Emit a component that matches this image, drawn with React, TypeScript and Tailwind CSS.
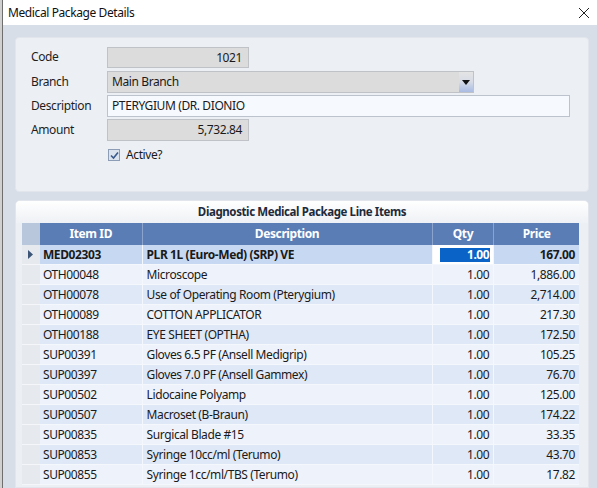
import React from "react";

const rows: [string, string, string, string][] = [
  ["MED02303", "PLR 1L (Euro-Med) (SRP) VE", "1.00", "167.00"],
  ["OTH00048", "Microscope", "1.00", "1,886.00"],
  ["OTH00078", "Use of Operating Room (Pterygium)", "1.00", "2,714.00"],
  ["OTH00089", "COTTON APPLICATOR", "1.00", "217.30"],
  ["OTH00188", "EYE SHEET (OPTHA)", "1.00", "172.50"],
  ["SUP00391", "Gloves 6.5 PF (Ansell Medigrip)", "1.00", "105.25"],
  ["SUP00397", "Gloves 7.0 PF (Ansell Gammex)", "1.00", "76.70"],
  ["SUP00502", "Lidocaine Polyamp", "1.00", "125.00"],
  ["SUP00507", "Macroset (B-Braun)", "1.00", "174.22"],
  ["SUP00835", "Surgical Blade #15", "1.00", "33.35"],
  ["SUP00853", "Syringe 10cc/ml (Terumo)", "1.00", "43.70"],
  ["SUP00855", "Syringe 1cc/ml/TBS (Terumo)", "1.00", "17.82"],
];

function Label({ children }: { children: React.ReactNode }) {
  return <div className="w-[76px] shrink-0 text-[12px] text-[#1e1e1e]">{children}</div>;
}

export default function App() {
  return (
    <div
      className="relative w-[597px] h-[488px] overflow-hidden bg-[#d7dee8] flex flex-col text-[#1a1a1a] tracking-[-0.4px]"
      style={{ fontFamily: '"Noto Sans", "Open Sans", sans-serif' }}
    >
      {/* title bar */}
      <div className="h-[25px] shrink-0 bg-white flex items-center pl-[8px] pr-[6px]">
        <div className="text-[12px] text-[#111] flex-1">Medical Package Details</div>
        <svg width="12" height="12" viewBox="0 0 12 12" className="mr-[1px]">
          <path d="M1 1 L11 11 M11 1 L1 11" stroke="#222" strokeWidth="1" />
        </svg>
      </div>
      {/* left window edge */}
      <div className="absolute left-0 top-0 h-full w-[3px] bg-[#d0d0d0] border-r border-[#6e6e6e]" />

      <div className="flex-1 flex flex-col pl-[15px] pr-[8px] pt-[12px]">
        {/* form panel */}
        <div className="h-[155px] shrink-0 bg-[#eceff3] rounded-[4px] border border-[#e2e6ec] flex flex-col pl-[15px] pt-[8px] gap-[2px]">
          <div className="flex items-center h-[22px]">
            <Label>Code</Label>
            <div className="w-[142px] h-[21px] bg-[#dcdcdc] border border-[#bfc3c8] text-[12px] text-right pr-[6px] leading-[19px]">1021</div>
          </div>
          <div className="flex items-center h-[22px] mt-[1px]">
            <Label>Branch</Label>
            <div className="w-[367px] h-[22px] bg-[#dcdcdc] border border-[#bfc3c8] flex">
              <div className="flex-1 text-[12px] pl-[4px] leading-[20px]">Main Branch</div>
              <div className="w-[14px] h-full bg-gradient-to-b from-[#e4e4e4] via-[#d6dbe6] to-[#a9bbe3] flex items-center justify-center">
                <svg width="8" height="5" viewBox="0 0 8 5">
                  <path d="M0 0 H8 L4 5 Z" fill="#111" />
                </svg>
              </div>
            </div>
          </div>
          <div className="flex items-center h-[22px]">
            <Label>Description</Label>
            <div className="w-[463px] h-[22px] bg-[#f6f9fd] border border-[#bcc3cc] text-[12px] pl-[4px] leading-[20px]">PTERYGIUM (DR. DIONIO</div>
          </div>
          <div className="flex items-center h-[22px]">
            <Label>Amount</Label>
            <div className="w-[142px] h-[22px] bg-[#dcdcdc] border border-[#bfc3c8] text-[12px] text-right pr-[6px] leading-[20px]">5,732.84</div>
          </div>
          <div className="flex items-center h-[22px] pl-[77px] mt-[1px]">
            <div className="w-[12px] h-[12px] border border-[#8c9db5] bg-[#dbe3ee] flex items-center justify-center">
              <svg width="9" height="9" viewBox="0 0 9 9">
                <path d="M1 4.5 L3.5 7 L8 1.5" stroke="#3a5a8c" strokeWidth="1.6" fill="none" />
              </svg>
            </div>
            <div className="text-[12px] ml-[6px]">Active?</div>
          </div>
        </div>

        {/* line items panel */}
        <div className="mt-[8px] flex-1 bg-[#eceff3] rounded-t-[5px] border border-[#e2e6ec] flex flex-col overflow-hidden">
          <div className="h-[22px] shrink-0 bg-gradient-to-b from-white to-[#eef1f5] flex items-center justify-center text-[11.5px] font-bold text-[#1e2a3a]">
            Diagnostic Medical Package Line Items
          </div>
          <div className="pl-[6px] pr-[9px]">
            {/* header */}
            <div className="flex h-[22px] text-[12px] font-bold text-white">
              <div className="w-[18px] bg-[#b9c7dc]" />
              <div className="w-[103px] bg-[#5a7db5] border-r border-[#8aa4cc] flex items-center justify-center">Item ID</div>
              <div className="w-[291px] bg-[#5a7db5] border-r border-[#8aa4cc] flex items-center justify-center">Description</div>
              <div className="w-[62px] bg-[#5a7db5] border-r border-[#8aa4cc] flex items-center justify-center">Qty</div>
              <div className="w-[85px] bg-[#5a7db5] flex items-center justify-center">Price</div>
            </div>
            {rows.map((r, i) => {
              const selected = i === 0;
              const bg = selected ? "bg-[#c7d9f2]" : i % 2 === 1 ? "bg-[#edf2fb]" : "bg-[#dfe8f6]";
              return (
                <div key={r[0]} className={`flex h-[20px] text-[12px] ${selected ? "font-bold" : ""}`}>
                  <div className="w-[18px] bg-[#e6e9ee] border-b border-[#f4f6f9] flex items-center justify-center">
                    {selected && (
                      <svg width="5" height="9" viewBox="0 0 5 9">
                        <path d="M0 0 L5 4.5 L0 9 Z" fill="#3d5678" />
                      </svg>
                    )}
                  </div>
                  <div className={`w-[103px] ${bg} border-r border-b border-[#f4f7fc] pl-[3px] leading-[19px]`}>{r[0]}</div>
                  <div className={`w-[291px] ${bg} border-r border-b border-[#f4f7fc] pl-[4px] leading-[19px] whitespace-nowrap`}>{r[1]}</div>
                  {selected ? (
                    <div className="w-[62px] bg-white border-r border-b border-[#f4f7fc] flex items-center pl-[7px] pr-[3px]">
                      <div className="flex-1 h-[14px] bg-[#0a64c8] text-white text-right leading-[14px] pr-[1px]">{r[2]}</div>
                    </div>
                  ) : (
                    <div className={`w-[62px] ${bg} border-r border-b border-[#f4f7fc] text-right pr-[4px] leading-[19px]`}>{r[2]}</div>
                  )}
                  <div className={`w-[85px] ${bg} border-b border-[#f4f7fc] text-right pr-[4px] leading-[19px]`}>{r[3]}</div>
                </div>
              );
            })}
          </div>
        </div>
      </div>
    </div>
  );
}
